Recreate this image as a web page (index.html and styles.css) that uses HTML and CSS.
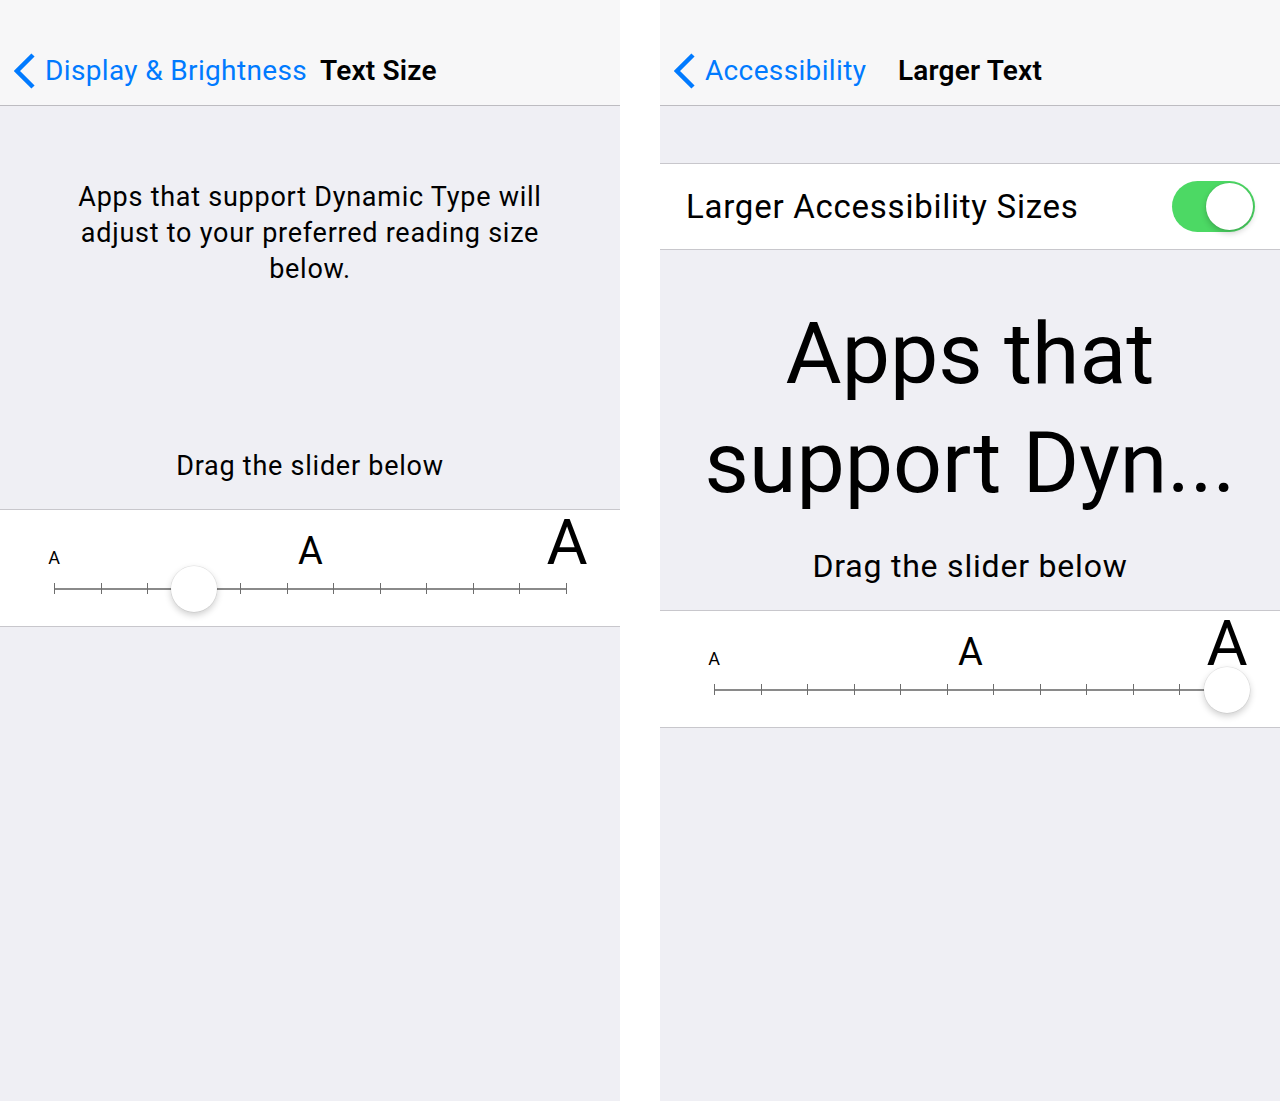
FILE: index.html
```html
<!DOCTYPE html>
<html lang="en">
<head>
  <meta charset="UTF-8" />
  <meta name="viewport" content="width=device-width, initial-scale=1.0"/>
  <title>Text Size</title>
  <link rel="stylesheet" href="styles.css">
</head>
<body>
  <div class="screens">

    <!-- Display & Brightness > Text Size -->
    <section class="screen">
      <header class="navbar">
        <a class="back" href="#">
          <svg class="chevron" width="22" height="36" viewBox="0 0 22 36"><polyline points="19,2 3,18 19,34" /></svg>
          <span>Display &amp; Brightness</span>
        </a>
        <h1 class="title">Text Size</h1>
      </header>

      <p class="intro">Apps that support Dynamic Type will adjust to your preferred reading size below.</p>
      <p class="hint">Drag the slider below</p>

      <div class="slider-cell">
        <div class="slider-labels">
          <span class="size-label"><span class="size-sm">A</span></span>
          <span class="size-label"><span class="size-md">A</span></span>
          <span class="size-label"><span class="size-lg">A</span></span>
        </div>
        <div class="track">
          <i></i><i></i><i></i><i></i><i></i><i></i><i></i><i></i><i></i><i></i><i></i><i></i>
          <span class="thumb" style="left: 27.27%"></span>
        </div>
      </div>
    </section>

    <!-- Accessibility > Larger Text -->
    <section class="screen">
      <header class="navbar">
        <a class="back" href="#">
          <svg class="chevron" width="22" height="36" viewBox="0 0 22 36"><polyline points="19,2 3,18 19,34" /></svg>
          <span>Accessibility</span>
        </a>
        <h1 class="title">Larger Text</h1>
      </header>

      <div class="group">
        <div class="cell">
          <span>Larger Accessibility Sizes</span>
          <span class="switch"><span class="knob"></span></span>
        </div>
      </div>

      <p class="preview">Apps that support Dyn...</p>
      <p class="hint hint-lg">Drag the slider below</p>

      <div class="slider-cell">
        <div class="slider-labels">
          <span class="size-label"><span class="size-sm">A</span></span>
          <span class="size-label"><span class="size-md">A</span></span>
          <span class="size-label"><span class="size-lg">A</span></span>
        </div>
        <div class="track">
          <i></i><i></i><i></i><i></i><i></i><i></i><i></i><i></i><i></i><i></i><i></i><i></i>
          <span class="thumb" style="left: 100%"></span>
        </div>
      </div>
    </section>

  </div>
</body>
</html>
```

FILE: styles.css
```css
body {
  margin: 0;
  background: #fff;
  font-family: Roboto, "Noto Sans", Arial, sans-serif;
  color: #000;
}
.screens {
  display: flex;
  gap: 40px;
  height: 1101px;
  overflow: hidden;
}
.screen {
  flex: none;
  width: 620px;
  background: #efeff4;
}

/* nav bar */
.navbar {
  box-sizing: border-box;
  height: 106px;
  padding: 36px 14px 0;
  display: grid;
  grid-template-columns: 1fr auto 1fr;
  column-gap: 13px;
  align-items: center;
  background: #f7f7f8;
  border-bottom: 1px solid #bdbcc1;
}
.back {
  display: flex;
  align-items: center;
  gap: 9px;
  color: #007aff;
  text-decoration: none;
  font-size: 28px;
  letter-spacing: 0.35px;
  white-space: nowrap;
}
.chevron {
  width: 22px;
  height: 36px;
}
.chevron polyline {
  fill: none;
  stroke: #007aff;
  stroke-width: 4.5;
}
.title {
  margin: 0;
  font-size: 28px;
  font-weight: 600;
  letter-spacing: 0.2px;
  white-space: nowrap;
}

/* texts */
.intro {
  width: 500px;
  margin: 73px auto 0;
  font-size: 27px;
  line-height: 36px;
  letter-spacing: 0.75px;
  text-align: center;
}
.hint {
  margin: 161px 0 25px;
  font-size: 27px;
  line-height: 36px;
  letter-spacing: 0.75px;
  text-align: center;
}
.hint-lg {
  margin: 29px 0 24px;
  font-size: 32px;
  line-height: 40px;
  letter-spacing: 0.8px;
}
.preview {
  margin: 49px 20px 0;
  font-size: 86px;
  line-height: 109px;
  text-align: center;
}

/* settings row */
.group {
  margin-top: 57px;
  background: #fff;
  border-top: 1px solid #c8c7cc;
  border-bottom: 1px solid #c8c7cc;
}
.cell {
  height: 85px;
  padding: 0 25px 0 26px;
  display: flex;
  justify-content: space-between;
  align-items: center;
  font-size: 33px;
  letter-spacing: 0.75px;
}
.switch {
  box-sizing: border-box;
  width: 83px;
  height: 51px;
  padding: 2px;
  border-radius: 26px;
  background: #4cd964;
  display: flex;
  justify-content: flex-end;
  align-items: center;
}
.knob {
  width: 47px;
  height: 47px;
  border-radius: 50%;
  background: #fff;
  box-shadow: 0 3px 6px rgba(0,0,0,0.2), 0 0 0 0.5px rgba(0,0,0,0.08);
}

/* slider */
.slider-cell {
  padding: 1px 53px 32px 54px;
  background: #fff;
  border-top: 1px solid #c8c7cc;
  border-bottom: 1px solid #c8c7cc;
}
.slider-labels {
  display: flex;
  justify-content: space-between;
  align-items: baseline;
}
.size-label {
  width: 0;
  display: flex;
  justify-content: center;
  line-height: 1;
}
.size-sm { font-size: 18px; }
.size-md { font-size: 38px; }
.size-lg { font-size: 63px; }
.track {
  position: relative;
  height: 11px;
  margin-top: 9px;
  display: flex;
  justify-content: space-between;
  background: linear-gradient(#8a8a8a, #8a8a8a) center / 100% 2px no-repeat;
}
.track i {
  width: 1px;
  background: #6e6e6e;
}
.thumb {
  position: absolute;
  top: 50%;
  width: 46px;
  height: 46px;
  border-radius: 50%;
  background: #fff;
  transform: translate(-50%, -50%);
  box-shadow: 0 3px 7px rgba(0,0,0,0.2), 0 0 0 0.5px rgba(0,0,0,0.1);
}
```
